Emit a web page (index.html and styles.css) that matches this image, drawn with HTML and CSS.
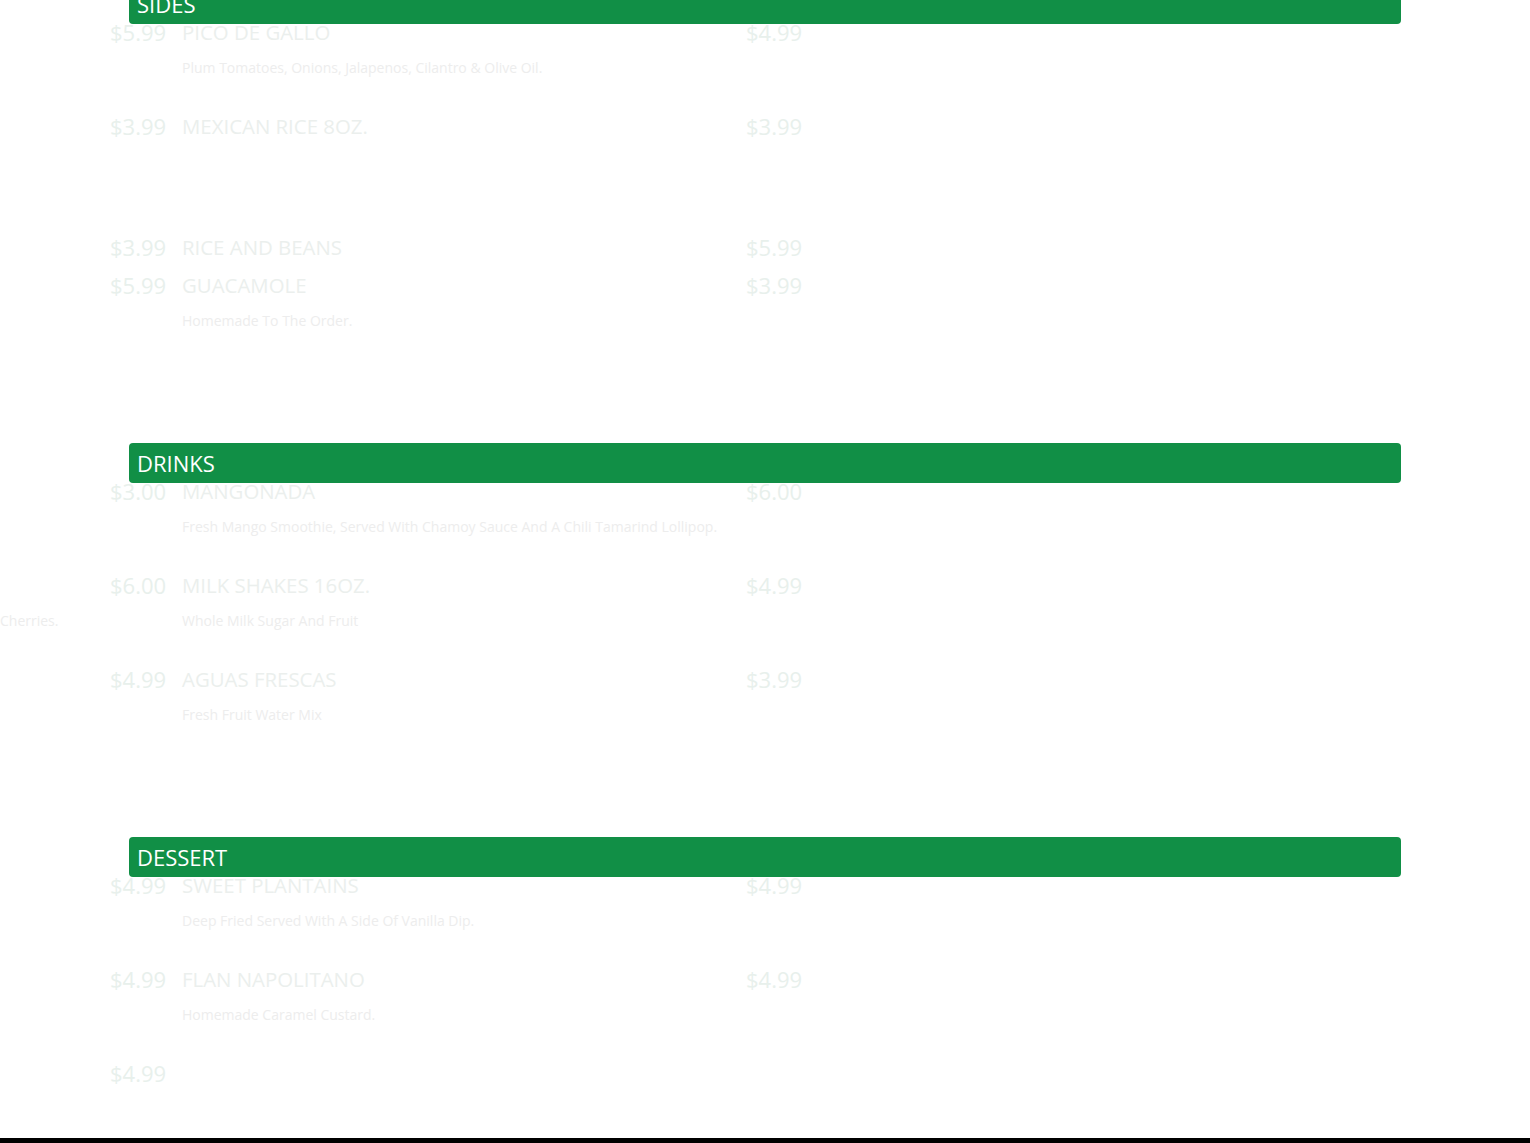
FILE: index.html
```html
<!DOCTYPE html>
<html lang="en">
<head>
  <meta charset="UTF-8">
  <title>Menu</title>
  <link rel="stylesheet" href="styles.css">
</head>
<body>

  <div class="menu">

    <section class="menu-section first">
      <h2 class="section-title">SIDES</h2>

      <div class="item">
        <span class="price">$5.99</span>
        <div class="info">
          <div class="name">PICO DE GALLO</div>
          <div class="desc">Plum Tomatoes, Onions, Jalapenos, Cilantro &amp; Olive Oil.</div>
        </div>
        <span class="price-alt">$4.99</span>
      </div>

      <div class="item spaced">
        <span class="price">$3.99</span>
        <div class="info">
          <div class="name">MEXICAN RICE 8OZ.</div>
        </div>
        <span class="price-alt">$3.99</span>
      </div>

      <div class="item tight">
        <span class="price">$3.99</span>
        <div class="info">
          <div class="name">RICE AND BEANS</div>
        </div>
        <span class="price-alt">$5.99</span>
      </div>

      <div class="item last">
        <span class="price">$5.99</span>
        <div class="info">
          <div class="name">GUACAMOLE</div>
          <div class="desc">Homemade To The Order.</div>
        </div>
        <span class="price-alt">$3.99</span>
      </div>
    </section>

    <section class="menu-section">
      <h2 class="section-title">DRINKS</h2>

      <div class="item">
        <span class="price">$3.00</span>
        <div class="info">
          <div class="name">MANGONADA</div>
          <div class="desc">Fresh Mango Smoothie, Served With Chamoy Sauce And A Chili Tamarind Lollipop.</div>
        </div>
        <span class="price-alt">$6.00</span>
      </div>

      <div class="item">
        <span class="price">$6.00</span>
        <div class="info">
          <div class="name">MILK SHAKES 16OZ.</div>
          <div class="desc">Whole Milk Sugar And Fruit</div>
        </div>
        <span class="price-alt">$4.99</span>
        <span class="stray">Cherries.</span>
      </div>

      <div class="item last">
        <span class="price">$4.99</span>
        <div class="info">
          <div class="name">AGUAS FRESCAS</div>
          <div class="desc">Fresh Fruit Water Mix</div>
        </div>
        <span class="price-alt">$3.99</span>
      </div>
    </section>

    <section class="menu-section">
      <h2 class="section-title">DESSERT</h2>

      <div class="item">
        <span class="price">$4.99</span>
        <div class="info">
          <div class="name">SWEET PLANTAINS</div>
          <div class="desc">Deep Fried Served With A Side Of Vanilla Dip.</div>
        </div>
        <span class="price-alt">$4.99</span>
      </div>

      <div class="item">
        <span class="price">$4.99</span>
        <div class="info">
          <div class="name">FLAN NAPOLITANO</div>
          <div class="desc">Homemade Caramel Custard.</div>
        </div>
        <span class="price-alt">$4.99</span>
      </div>

      <div class="item end">
        <span class="price">$4.99</span>
        <div class="info">
          <div class="name">&nbsp;</div>
        </div>
      </div>
    </section>

  </div>

  <footer class="footer"></footer>

</body>
</html>
```

FILE: styles.css
```css
html, body {
  margin: 0;
  padding: 0;
  background: #fff;
  overflow: hidden;
}

body {
  font-family: "Open Sans", Arial, sans-serif;
  height: 1143px;
  display: flex;
  flex-direction: column;
}

.menu {
  padding-left: 110px;
  margin-top: -16px;
  flex-shrink: 0;
}

.section-title {
  margin: 0 0 -2px 19px;
  width: 1264px;
  height: 40px;
  padding-left: 8px;
  background: #118f46;
  border-radius: 4px;
  color: #fff;
  font-size: 22px;
  font-weight: normal;
  line-height: 40px;
  position: relative;
  z-index: 1;
}

.item {
  display: flex;
  align-items: flex-start;
  margin-bottom: 38px;
  position: relative;
}

.item.spaced {
  margin-bottom: 101px;
}

.item.tight {
  margin-bottom: 18px;
}

.item.last {
  margin-bottom: 112px;
}

.item.end {
  margin-bottom: 55px;
}

.price {
  width: 56px;
  margin-right: 16px;
  text-align: right;
  font-size: 22px;
  line-height: 20px;
  color: #e8f0ec;
  white-space: nowrap;
}

.info {
  width: 564px;
}

.name {
  font-size: 20.4px;
  line-height: 20px;
  color: #ebefed;
}

.desc {
  margin-top: 16px;
  font-size: 14px;
  line-height: 20px;
  color: #ededed;
}

.price-alt {
  font-size: 22px;
  line-height: 20px;
  color: #e8f0ec;
}

.stray {
  position: absolute;
  left: -110px;
  top: 36px;
  font-size: 14px;
  line-height: 20px;
  color: #ededed;
}

.footer {
  background: #000;
  flex: 1;
}
```
